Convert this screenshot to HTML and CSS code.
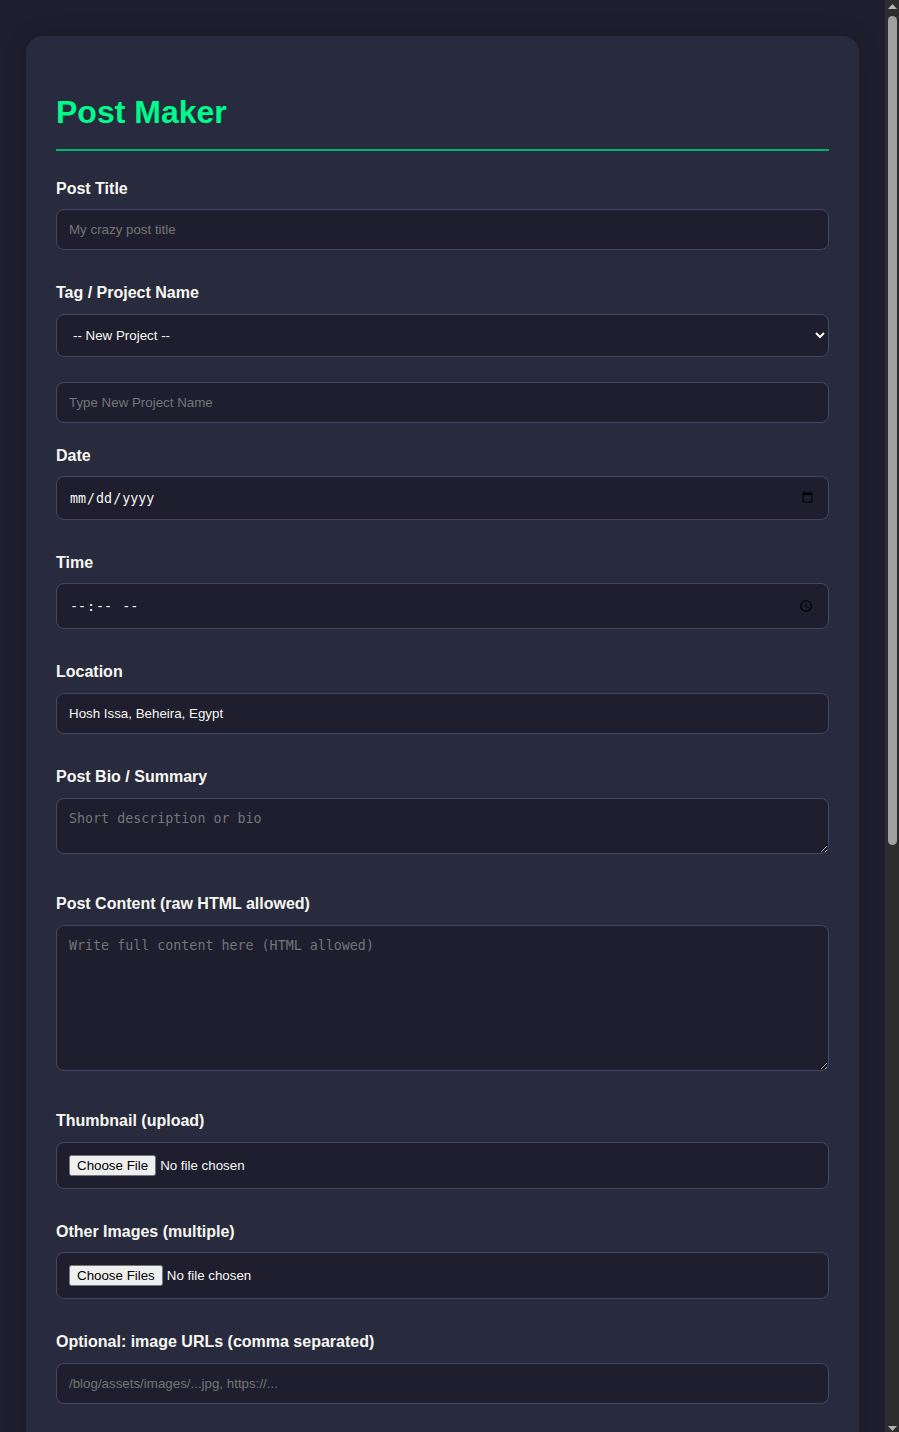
FILE: index.html
```html
<!DOCTYPE html>
<html lang="en">
<head>
<meta charset="utf-8">
<title>Post Maker</title>
<link rel="stylesheet" href="styles.css">
</head>
<body>
<main class="card">
  <h1 class="title">Post Maker</h1>
  <form class="form">
    <label class="label" for="title">Post Title</label>
    <input class="control" id="title" type="text" placeholder="My crazy post title">

    <label class="label" for="tag">Tag / Project Name</label>
    <select class="control control-select" id="tag">
      <option>-- New Project --</option>
    </select>
    <input class="control control-tight" type="text" placeholder="Type New Project Name">

    <label class="label" for="date">Date</label>
    <input class="control control-mono control-date" id="date" type="date">

    <label class="label" for="time">Time</label>
    <input class="control control-mono control-time" id="time" type="time">

    <label class="label" for="location">Location</label>
    <input class="control control-location" id="location" type="text" value="Hosh Issa, Beheira, Egypt">

    <label class="label" for="bio">Post Bio / Summary</label>
    <textarea class="control control-area" id="bio" rows="2" placeholder="Short description or bio"></textarea>

    <label class="label" for="content">Post Content (raw HTML allowed)</label>
    <textarea class="control control-area control-area-big" id="content" placeholder="Write full content here (HTML allowed)"></textarea>

    <label class="label" for="thumb">Thumbnail (upload)</label>
    <input class="control control-thumb" id="thumb" type="file">

    <label class="label" for="images">Other Images (multiple)</label>
    <input class="control" id="images" type="file" multiple>

    <label class="label" for="urls">Optional: image URLs (comma separated)</label>
    <input class="control" id="urls" type="text" placeholder="/blog/assets/images/...jpg, https://...">
  </form>
</main>
<aside class="scrollbar" aria-hidden="true">
  <svg class="scrollbar-arrow" width="14" height="16" viewBox="0 0 14 16"><path d="M7.5 4L12 9H3z" fill="#b4b4b4"/></svg>
  <div class="scrollbar-track"><div class="scrollbar-thumb"></div></div>
  <svg class="scrollbar-arrow" width="14" height="16" viewBox="0 0 14 16"><path d="M3 10H12L7.5 15z" fill="#b4b4b4"/></svg>
</aside>
</body>
</html>
```
FILE: styles.css
```css
body {
  margin: 0 14px 0 0;
  background: #1e1e2e;
  color: #f8f8f2;
  font-family: "Liberation Sans", Arial, sans-serif;
}

.scrollbar {
  position: fixed;
  top: 0;
  right: 0;
  bottom: 0;
  width: 14px;
  display: flex;
  flex-direction: column;
  background: #2d2d2d;
}

.scrollbar-arrow {
  display: block;
  flex: none;
}

.scrollbar-track {
  flex: 1;
  padding: 0 2px 0 3px;
}

.scrollbar-thumb {
  height: 829px;
  background: #a0a0a0;
  border-radius: 5px;
}

.card {
  box-sizing: border-box;
  width: 833px;
  min-height: 2343px;
  margin: 36px auto;
  padding: 28px 30px 30px;
  background: #282b3d;
  border-radius: 16px;
  box-shadow: 0 0 24px rgba(0, 0, 0, 0.12);
}

.title {
  margin: 30px 0 28.6px;
  padding-bottom: 18px;
  border-bottom: 2px solid #00b574;
  color: #00fa8c;
  font-size: 32px;
  line-height: 37px;
  font-weight: 700;
}

.label {
  display: block;
  margin: 0 0 11.4px;
  font-size: 16px;
  line-height: 18px;
  font-weight: 700;
  color: #f8f8f2;
}

.control {
  display: block;
  box-sizing: border-box;
  width: 100%;
  margin: 0 0 34.3px;
  padding: 12px;
  background: #1e1e2e;
  border: 1px solid #444663;
  border-radius: 8px;
  color: #f8f8f2;
  font-size: 13.33px;
  font-family: "Liberation Sans", Arial, sans-serif;
}

.control-select {
  margin-bottom: 25px;
}

.control-tight {
  margin-bottom: 23.9px;
}

.control-mono {
  font-family: monospace;
  font-size: 13.33px;
}

.control-date {
  height: 44px;
  margin-bottom: 34px;
}

.control-date::-webkit-datetime-edit {
  position: relative;
  top: 1px;
}

.control-time {
  margin-bottom: 34px;
}

.control-location {
  margin-bottom: 34.6px;
}

.control-area {
  height: 56px;
  margin-bottom: 41.5px;
  font-family: monospace;
  font-size: 13.33px;
}

.control-area-big {
  height: 146px;
  margin-bottom: 41.8px;
}

.control-thumb {
  margin-bottom: 34px;
}
```
